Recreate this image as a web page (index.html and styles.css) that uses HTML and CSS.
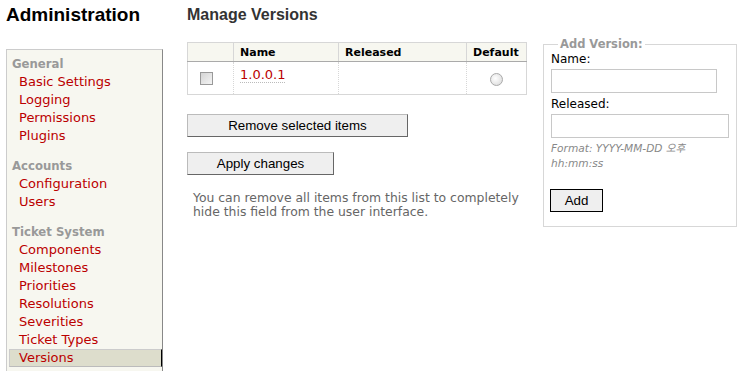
FILE: index.html
```html
<!DOCTYPE html>
<html lang="en">
<head>
  <meta charset="UTF-8" />
  <title>Manage Versions | Administration</title>
  <meta name="viewport" content="width=device-width, initial-scale=1.0" />
  <link rel="stylesheet" href="styles.css">
</head>
<body>
  <div class="page">
    <!-- Menu lateral -->
    <div class="side">
      <h1 class="title">Administration</h1>
      <ul class="tabs">
        <li class="group">General
          <ul>
            <li><a href="#">Basic Settings</a></li>
            <li><a href="#">Logging</a></li>
            <li><a href="#">Permissions</a></li>
            <li><a href="#">Plugins</a></li>
          </ul>
        </li>
        <li class="group">Accounts
          <ul>
            <li><a href="#">Configuration</a></li>
            <li><a href="#">Users</a></li>
          </ul>
        </li>
        <li class="group">Ticket System
          <ul>
            <li><a href="#">Components</a></li>
            <li><a href="#">Milestones</a></li>
            <li><a href="#">Priorities</a></li>
            <li><a href="#">Resolutions</a></li>
            <li><a href="#">Severities</a></li>
            <li><a href="#">Ticket Types</a></li>
            <li class="active"><a href="#">Versions</a></li>
          </ul>
        </li>
      </ul>
    </div>

    <!-- Contenido -->
    <div class="main">
      <h2 class="heading">Manage Versions</h2>
      <div class="content">
        <div class="listing-col">
          <table class="listing">
            <colgroup>
              <col class="c-sel" />
              <col class="c-name" />
              <col class="c-date" />
              <col class="c-default" />
            </colgroup>
            <thead>
              <tr>
                <th></th>
                <th>Name</th>
                <th>Released</th>
                <th>Default</th>
              </tr>
            </thead>
            <tbody>
              <tr>
                <td class="sel"><input type="checkbox" class="check" /></td>
                <td class="name"><a href="#">1.0.0.1</a></td>
                <td></td>
                <td class="default"><input type="radio" class="radio" name="default" /></td>
              </tr>
            </tbody>
          </table>
          <div class="buttons">
            <button class="btn btn-remove">Remove selected items</button>
            <button class="btn btn-apply">Apply changes</button>
          </div>
          <p class="help">You can remove all items from this list to completely hide this field from the user interface.</p>
        </div>

        <fieldset class="add-box">
          <legend>Add Version:</legend>
          <label>Name:</label>
          <input type="text" class="field field-name" />
          <label class="second">Released:</label>
          <input type="text" class="field field-date" />
          <p class="hint">Format: YYYY-MM-DD 오후 hh:mm:ss</p>
          <button class="btn btn-add">Add</button>
        </fieldset>
      </div>
    </div>
  </div>
</body>
</html>
```

FILE: styles.css
```css
body {
  margin: 0;
  font-family: 'DejaVu Sans', Verdana, sans-serif;
  font-size: 13px;
  background: #fff;
  color: #000;
}

a {
  color: #b00;
  text-decoration: none;
}

.page {
  display: flex;
  align-items: flex-start;
  padding-left: 6px;
}

/* Menu lateral */
.side {
  width: 157px;
  flex: none;
}

.title {
  font-family: 'Liberation Sans', Arial, sans-serif;
  font-size: 19px;
  line-height: 24px;
  font-weight: bold;
  margin: 3px 0 22px;
}

.tabs {
  list-style: none;
  margin: 0;
  padding: 6px 1px 20px;
  background: #f7f7f0;
  border: 1px solid;
  border-color: #ccc #888 #888 #ccc;
}

.group {
  color: #999;
  font-weight: bold;
  font-size: 11.7px;
  line-height: 17px;
  padding-left: 4px;
  margin-bottom: 13px;
}

.group ul {
  list-style: none;
  margin: 0 -1px 0 -3px;
  padding: 0;
  font-weight: normal;
  font-size: 13px;
}

.group ul li a {
  display: block;
  line-height: 16px;
  padding-left: 9px;
  border: 1px solid transparent;
}

.group ul li.active a {
  background: #ddddcc;
  border-color: #ccc #000 #bbb #ccc;
}

/* Contenido */
.main {
  margin-left: 24px;
  flex: none;
}

.heading {
  font-family: 'Liberation Sans', Arial, sans-serif;
  font-size: 16px;
  line-height: 20px;
  color: #333;
  margin: 5px 0 17px;
}

.content {
  display: flex;
  align-items: flex-start;
}

.listing-col {
  width: 339px;
}

.listing {
  border-collapse: collapse;
  table-layout: fixed;
  width: 339px;
  border: 1px solid #d7d7d7;
}

.c-sel { width: 46px; }
.c-name { width: 105px; }
.c-date { width: 128px; }
.c-default { width: 60px; }

.listing th {
  background: #f7f7f0;
  font-size: 11px;
  line-height: 14px;
  font-weight: bold;
  text-align: left;
  padding: 3px 6px 1px;
  border-left: 1px solid #d7d7d7;
  border-bottom: 1px solid #aaa;
}

.listing td {
  height: 33px;
  padding: 0 6px;
  border-left: 1px dotted #d7d7d7;
  border-bottom: 1px solid #d7d7d7;
  box-sizing: border-box;
}

.listing td.sel {
  padding-left: 12px;
  vertical-align: middle;
}

.listing td.name {
  vertical-align: top;
  padding-top: 5px;
  line-height: 15px;
}

.listing td.name a {
  border-bottom: 1px dotted #bbb;
}

.listing td.default {
  text-align: center;
  vertical-align: middle;
}

.check {
  appearance: none;
  display: block;
  width: 13px;
  height: 13px;
  margin: 0;
  border: 1px solid #999;
  background: linear-gradient(135deg, #d4d4d4, #f4f4f4);
}

.radio {
  appearance: none;
  display: inline-block;
  vertical-align: middle;
  width: 13px;
  height: 13px;
  margin: 1px 0 0;
  border: 1px solid #aaa;
  border-radius: 50%;
  background: radial-gradient(circle at 40% 40%, #fff, #d6d6d6);
}

.buttons {
  display: flex;
  flex-direction: column;
  align-items: flex-start;
  gap: 15px;
  margin-top: 19px;
}

.btn {
  font-family: 'Liberation Sans', Arial, sans-serif;
  font-size: 13.33px;
  height: 23px;
  padding: 0;
  background: #efefef;
  color: #000;
  border: 1px solid;
  border-color: #bbb #666 #666 #bbb;
}

.btn-remove { width: 221px; }
.btn-apply { width: 147px; }

.help {
  margin: 16px 0 0;
  padding-left: 6px;
  font-size: 12.4px;
  line-height: 14px;
  color: #666;
}

/* Formulario */
.add-box {
  width: 176px;
  box-sizing: border-box;
  margin: -5px 0 0 17px;
  padding: 1px 7px 14px;
  border: 1px solid #d7d7d7;
}

.add-box legend {
  margin-left: 7px;
  padding: 0 2px;
  color: #999;
  font-weight: bold;
  font-size: 11.5px;
  line-height: 14px;
}

.add-box label {
  display: block;
  font-size: 12px;
  line-height: 15px;
}

.add-box label.second {
  margin-top: 4px;
}

.field {
  display: block;
  box-sizing: border-box;
  height: 24px;
  margin: 2px 0 0;
  border: 1px solid #c8c8c8;
  background: #fff;
}

.field-name { width: 166px; }
.field-date { width: 178px; }

.hint {
  margin: 3px 0 0;
  font-size: 10.6px;
  line-height: 15px;
  font-style: italic;
  color: #888;
  font-family: 'DejaVu Sans', 'Noto Sans CJK KR', sans-serif;
}

.btn-add {
  display: block;
  width: 53px;
  margin-top: 18px;
  margin-left: -1px;
  border: 1px solid #000;
}
```
